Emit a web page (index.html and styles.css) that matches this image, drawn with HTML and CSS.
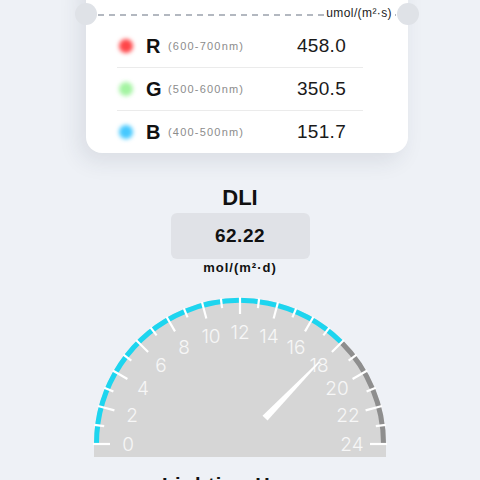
FILE: index.html
```html
<!DOCTYPE html>
<html lang="en">
<head>
    <meta charset="UTF-8">
    <meta name="viewport" content="width=device-width, initial-scale=1.0">
    <title>Light Meter</title>
    <link rel="stylesheet" href="styles.css">
</head>
<body>

<div class="card">
    <div class="card-head">
        <span class="unit-top">umol/(m²·s)</span>
    </div>
    <div class="dash"></div>
    <div class="rows">
        <div class="row">
            <span class="dot red"></span>
            <span class="letter">R</span>
            <span class="range">(600-700nm)</span>
            <span class="val">458.0</span>
        </div>
        <div class="row">
            <span class="dot green"></span>
            <span class="letter">G</span>
            <span class="range">(500-600nm)</span>
            <span class="val">350.5</span>
        </div>
        <div class="row">
            <span class="dot blue"></span>
            <span class="letter">B</span>
            <span class="range">(400-500nm)</span>
            <span class="val">151.7</span>
        </div>
    </div>
</div>

<div class="dli">
    <h2>DLI</h2>
    <div class="dli-box">62.22</div>
    <div class="dli-unit">mol/(m²·d)</div>
</div>

<svg class="gauge" width="300" height="168" viewBox="90 290 300 168">
    <path class="dial" d="M94 444 A146 146 0 0 1 386 444 L386 457 L94 457 Z"/>
    <path class="arc-on" d="M96.5 444 A143.5 143.5 0 0 1 341.5 342.5"/>
    <path class="arc-off" d="M341.5 342.5 A143.5 143.5 0 0 1 383.5 444"/>
    <g class="ticks">
        <line x1="93" y1="444" x2="110" y2="444" transform="rotate(0 240 444)"/>
        <line x1="93" y1="444" x2="103" y2="444" transform="rotate(7.5 240 444)"/>
        <line x1="93" y1="444" x2="110" y2="444" transform="rotate(15 240 444)"/>
        <line x1="93" y1="444" x2="103" y2="444" transform="rotate(22.5 240 444)"/>
        <line x1="93" y1="444" x2="110" y2="444" transform="rotate(30 240 444)"/>
        <line x1="93" y1="444" x2="103" y2="444" transform="rotate(37.5 240 444)"/>
        <line x1="93" y1="444" x2="110" y2="444" transform="rotate(45 240 444)"/>
        <line x1="93" y1="444" x2="103" y2="444" transform="rotate(52.5 240 444)"/>
        <line x1="93" y1="444" x2="110" y2="444" transform="rotate(60 240 444)"/>
        <line x1="93" y1="444" x2="103" y2="444" transform="rotate(67.5 240 444)"/>
        <line x1="93" y1="444" x2="110" y2="444" transform="rotate(75 240 444)"/>
        <line x1="93" y1="444" x2="103" y2="444" transform="rotate(82.5 240 444)"/>
        <line x1="93" y1="444" x2="110" y2="444" transform="rotate(90 240 444)"/>
        <line x1="93" y1="444" x2="103" y2="444" transform="rotate(97.5 240 444)"/>
        <line x1="93" y1="444" x2="110" y2="444" transform="rotate(105 240 444)"/>
        <line x1="93" y1="444" x2="103" y2="444" transform="rotate(112.5 240 444)"/>
        <line x1="93" y1="444" x2="110" y2="444" transform="rotate(120 240 444)"/>
        <line x1="93" y1="444" x2="103" y2="444" transform="rotate(127.5 240 444)"/>
        <line x1="93" y1="444" x2="110" y2="444" transform="rotate(135 240 444)"/>
        <line x1="93" y1="444" x2="103" y2="444" transform="rotate(142.5 240 444)"/>
        <line x1="93" y1="444" x2="110" y2="444" transform="rotate(150 240 444)"/>
        <line x1="93" y1="444" x2="103" y2="444" transform="rotate(157.5 240 444)"/>
        <line x1="93" y1="444" x2="110" y2="444" transform="rotate(165 240 444)"/>
        <line x1="93" y1="444" x2="103" y2="444" transform="rotate(172.5 240 444)"/>
        <line x1="93" y1="444" x2="110" y2="444" transform="rotate(180 240 444)"/>
    </g>
    <g class="labels">
        <text x="128" y="444">0</text>
        <text x="132" y="415">2</text>
        <text x="143" y="388">4</text>
        <text x="161" y="365">6</text>
        <text x="184" y="347">8</text>
        <text x="211" y="336">10</text>
        <text x="240" y="332">12</text>
        <text x="269" y="336">14</text>
        <text x="296" y="347">16</text>
        <text x="319" y="365">18</text>
        <text x="337" y="388">20</text>
        <text x="348" y="415">22</text>
        <text x="352" y="444">24</text>
    </g>
    <!-- needle drawn pointing left, then turned to the value -->
    <polygon class="needle" points="204,440.5 126,443.3 126,444.7 204,447.5" transform="rotate(134 240 444)"/>
</svg>

<h3 class="gauge-title">Lighting Hours</h3>

</body>
</html>
```

FILE: styles.css
```css
html, body {
    overflow: hidden;
}
body {
    margin: 0;
    background: #eef1f6;
    font-family: "Liberation Sans", Arial, sans-serif;
    color: #111;
}

/* spectrum card (ticket style) */
.card {
    position: relative;
    width: 322px;
    margin: -30px 0 0 86px;
    background: #fff;
    border-radius: 16px;
    box-shadow: -6px 8px 22px rgba(40, 50, 70, 0.10);
}
.card::before,
.card::after {
    content: "";
    position: absolute;
    top: 33px;
    width: 22px;
    height: 22px;
    border-radius: 50%;
    background: #dfe2e7;
}
.card::before {
    left: -11px;
}
.card::after {
    right: -11px;
}
.card-head {
    height: 44px;
    display: flex;
    justify-content: flex-end;
    align-items: flex-end;
    padding-right: 16px;
}
.unit-top {
    font-size: 12px;
    line-height: 12px;
    color: #222;
    letter-spacing: 0.4px;
    margin-bottom: -5px;
    background: #fff;
    padding-left: 2px;
    position: relative;
    z-index: 1;
}
.dash {
    height: 2px;
    margin: 0 12px;
    background: repeating-linear-gradient(90deg, #b3b8c0 0 6px, transparent 6px 11px);
}
.rows {
    margin: 0 45px 0 31px;
    padding-top: 9px;
}
.row {
    height: 42px;
    display: flex;
    align-items: center;
}
.row + .row {
    border-top: 1px solid #ebebeb;
}
.dot {
    width: 14px;
    height: 14px;
    margin-left: 2px;
    border-radius: 50%;
    filter: blur(2px);
}
.dot.red {
    background: #ff4649;
}
.dot.green {
    background: #a4f4a2;
}
.dot.blue {
    background: #46c9ff;
}
.letter {
    width: 16px;
    margin-left: 13px;
    font-size: 20px;
    font-weight: bold;
}
.range {
    flex: 1;
    margin-left: 6px;
    font-size: 11px;
    color: #8c8c8c;
    letter-spacing: 1.2px;
}
.val {
    width: 66px;
    font-size: 19px;
    color: #1a1a1a;
    letter-spacing: 0.3px;
}

/* DLI */
.dli {
    display: flex;
    flex-direction: column;
    align-items: center;
    margin-top: 32px;
}
.dli h2 {
    margin: 0;
    font-size: 22px;
    line-height: 26px;
}
.dli-box {
    width: 139px;
    height: 46px;
    margin-top: 2px;
    border-radius: 6px;
    background: #e0e2e7;
    display: flex;
    align-items: center;
    justify-content: center;
    font-size: 19px;
    font-weight: bold;
    letter-spacing: 0.5px;
}
.dli-unit {
    margin-top: 1px;
    font-size: 13px;
    line-height: 16px;
    font-weight: bold;
    letter-spacing: 1px;
}

/* gauge */
.gauge {
    display: block;
    margin: 14px auto 0;
}
.dial {
    fill: #d6d6d6;
}
.arc-on {
    fill: none;
    stroke: #1dd5ef;
    stroke-width: 5;
}
.arc-off {
    fill: none;
    stroke: #8e8e8e;
    stroke-width: 5;
}
.ticks line {
    stroke: #fff;
    stroke-width: 2.2;
}
.labels text {
    fill: #f7f7f7;
    font-family: Inter, "Liberation Sans", sans-serif;
    font-weight: 300;
    font-size: 19px;
    text-anchor: middle;
    dominant-baseline: central;
}
.needle {
    fill: #fff;
}
.gauge-title {
    margin: 15px 0 0;
    text-align: center;
    font-size: 20px;
    line-height: 24px;
    letter-spacing: 1px;
}
```
